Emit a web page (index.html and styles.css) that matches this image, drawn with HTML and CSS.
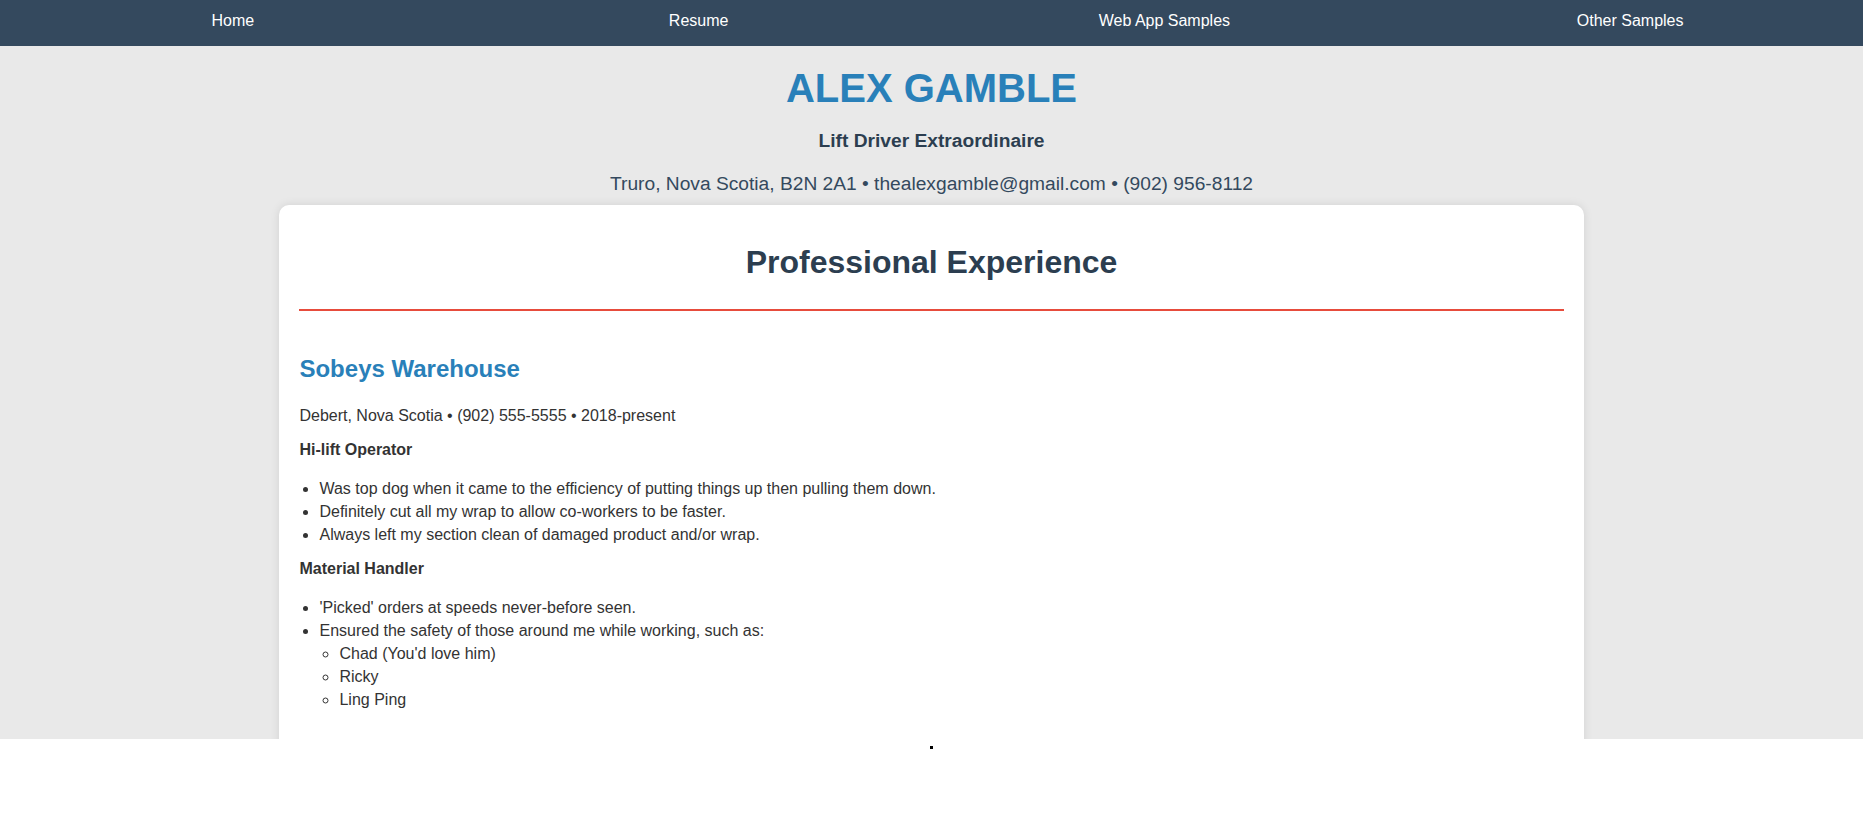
FILE: index.html
```html
<!DOCTYPE html>
<html lang="en">
<head>
<meta charset="utf-8">
<title>Alex Gamble - Resume</title>
<link rel="stylesheet" href="styles.css">
</head>
<body>
<div class="page">
  <nav class="topnav">
    <a class="topnav-link" href="#">Home</a>
    <a class="topnav-link" href="#">Resume</a>
    <a class="topnav-link" href="#">Web App Samples</a>
    <a class="topnav-link" href="#">Other Samples</a>
  </nav>
  <header class="hero">
    <h1 class="hero-name">ALEX GAMBLE</h1>
    <p class="hero-tagline">Lift Driver Extraordinaire</p>
    <p class="hero-contact">Truro, Nova Scotia, B2N 2A1 &bull; thealexgamble@gmail.com &bull; (902) 956-8112</p>
  </header>
  <main class="card">
    <h2 class="section-title">Professional Experience</h2>
    <section class="job">
      <h3 class="job-employer">Sobeys Warehouse</h3>
      <p class="job-meta">Debert, Nova Scotia &bull; (902) 555-5555 &bull; 2018-present</p>
      <p class="job-role">Hi-lift Operator</p>
      <ul class="duties">
        <li>Was top dog when it came to the efficiency of putting things up then pulling them down.</li>
        <li>Definitely cut all my wrap to allow co-workers to be faster.</li>
        <li>Always left my section clean of damaged product and/or wrap.</li>
      </ul>
      <p class="job-role">Material Handler</p>
      <ul class="duties">
        <li>'Picked' orders at speeds never-before seen.</li>
        <li>Ensured the safety of those around me while working, such as:
          <ul class="duties-sub">
            <li>Chad (You'd love him)</li>
            <li>Ricky</li>
            <li>Ling Ping</li>
          </ul>
        </li>
      </ul>
    </section>
  </main>
</div>
<footer class="foot"><span class="foot-dot"></span></footer>
</body>
</html>
```
FILE: styles.css
```css
html, body {
  margin: 0;
  padding: 0;
  background: #ffffff;
}

body {
  font-family: "Liberation Sans", Arial, sans-serif;
  font-size: 16px;
  color: #333333;
}

.page {
  height: 739px;
  overflow: hidden;
  background: #e9e9e9;
}

.topnav {
  display: flex;
  background: #34495e;
  height: 46px;
  box-sizing: border-box;
  padding-top: 12px;
}

.topnav-link {
  flex: 1;
  text-align: center;
  color: #ffffff;
  text-decoration: none;
  font-size: 16px;
  line-height: 18px;
}

.hero {
  text-align: center;
}

.hero-name {
  margin: 19px 0 0;
  font-size: 40px;
  line-height: 46px;
  font-weight: bold;
  color: #2980b9;
}

.hero-tagline {
  margin: 19px 0 0;
  font-size: 19.2px;
  line-height: 22px;
  font-weight: bold;
  color: #2c3e50;
}

.hero-contact {
  margin: 21px 0 0;
  font-size: 19.2px;
  line-height: 22px;
  color: #34495e;
}

.card {
  display: block;
  width: 70%;
  margin: 10px auto 0;
  background: #ffffff;
  border-radius: 10px;
  box-shadow: 0 0 10px rgba(0, 0, 0, 0.1);
  padding: 0 20px 60px;
  box-sizing: border-box;
}

.section-title {
  margin: 0;
  padding: 39px 0 29px;
  font-size: 32px;
  line-height: 36px;
  font-weight: bold;
  text-align: center;
  color: #2c3e50;
  border-bottom: 2px solid #e74c3c;
}

.job-employer {
  margin: 44px 0 21px;
  font-size: 24px;
  line-height: 28px;
  font-weight: bold;
  color: #2980b9;
}

.job-meta,
.job-role {
  margin: 10px 0;
  line-height: 24px;
}

.job-role {
  font-weight: bold;
}

.duties {
  margin: 15px 0 11px;
  padding-left: 20px;
  line-height: 23px;
}

.duties-sub {
  margin: 0;
  padding-left: 20px;
  list-style: circle;
}

.foot {
  display: flex;
  justify-content: center;
  padding-top: 7px;
}

.foot-dot {
  display: block;
  width: 3px;
  height: 3px;
  background: #000000;
}
```
